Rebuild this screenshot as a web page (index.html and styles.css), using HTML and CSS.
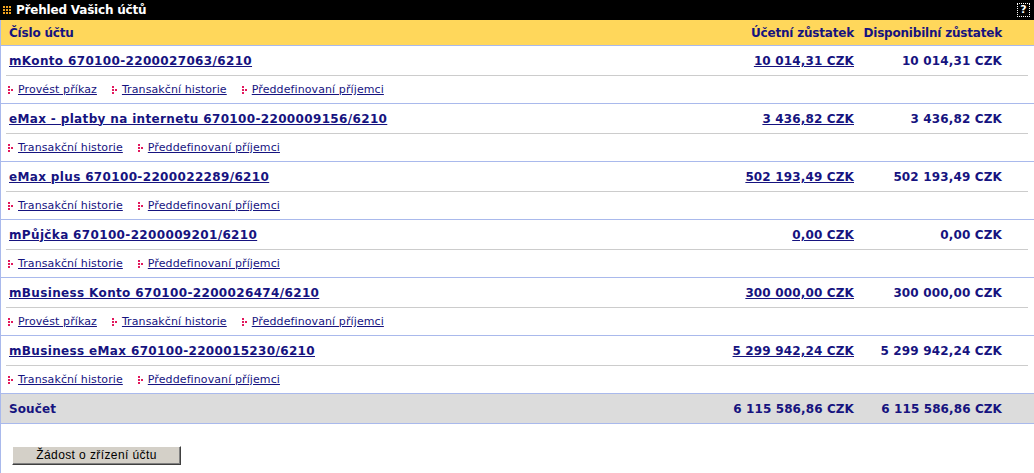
FILE: index.html
```html
<!DOCTYPE html>
<html lang="cs">
<head>
<meta charset="utf-8">
<title>Přehled Vašich účtů</title>
<link rel="stylesheet" href="styles.css">
</head>
<body>
<div class="panel">
  <div class="titlebar">
    <svg class="ticon" width="8" height="8" viewBox="0 0 8 8">
      <g fill="#f2a31f">
        <rect x="0" y="0" width="2" height="2"/><rect x="3" y="0" width="2" height="2"/><rect x="6" y="0" width="2" height="2"/>
        <rect x="0" y="3" width="2" height="2"/><rect x="3" y="3" width="2" height="2"/><rect x="6" y="3" width="2" height="2"/>
        <rect x="0" y="6" width="2" height="2"/><rect x="3" y="6" width="2" height="2"/><rect x="6" y="6" width="2" height="2"/>
      </g>
    </svg>
    <span class="ttext">Přehled Vašich účtů</span>
    <span class="help">?</span>
  </div>

  <div class="head">
    <div>Číslo účtu</div>
    <div class="num">Účetní zůstatek</div>
    <div class="num">Disponibilní zůstatek</div>
  </div>

  <div class="acct">
    <div class="acct-line">
      <a href="#" class="name">mKonto 670100-2200027063/6210</a>
      <a href="#" class="num">10 014,31 CZK</a>
      <span class="num">10 014,31 CZK</span>
    </div>
    <div class="links">
      <a href="#" class="lnk">Provést příkaz</a>
      <a href="#" class="lnk">Transakční historie</a>
      <a href="#" class="lnk">Předdefinovaní příjemci</a>
    </div>
  </div>

  <div class="acct">
    <div class="acct-line">
      <a href="#" class="name">eMax - platby na internetu 670100-2200009156/6210</a>
      <a href="#" class="num">3 436,82 CZK</a>
      <span class="num">3 436,82 CZK</span>
    </div>
    <div class="links">
      <a href="#" class="lnk">Transakční historie</a>
      <a href="#" class="lnk">Předdefinovaní příjemci</a>
    </div>
  </div>

  <div class="acct">
    <div class="acct-line">
      <a href="#" class="name">eMax plus 670100-2200022289/6210</a>
      <a href="#" class="num">502 193,49 CZK</a>
      <span class="num">502 193,49 CZK</span>
    </div>
    <div class="links">
      <a href="#" class="lnk">Transakční historie</a>
      <a href="#" class="lnk">Předdefinovaní příjemci</a>
    </div>
  </div>

  <div class="acct">
    <div class="acct-line">
      <a href="#" class="name">mPůjčka 670100-2200009201/6210</a>
      <a href="#" class="num">0,00 CZK</a>
      <span class="num">0,00 CZK</span>
    </div>
    <div class="links">
      <a href="#" class="lnk">Transakční historie</a>
      <a href="#" class="lnk">Předdefinovaní příjemci</a>
    </div>
  </div>

  <div class="acct">
    <div class="acct-line">
      <a href="#" class="name">mBusiness Konto 670100-2200026474/6210</a>
      <a href="#" class="num">300 000,00 CZK</a>
      <span class="num">300 000,00 CZK</span>
    </div>
    <div class="links">
      <a href="#" class="lnk">Provést příkaz</a>
      <a href="#" class="lnk">Transakční historie</a>
      <a href="#" class="lnk">Předdefinovaní příjemci</a>
    </div>
  </div>

  <div class="acct">
    <div class="acct-line">
      <a href="#" class="name">mBusiness eMax 670100-2200015230/6210</a>
      <a href="#" class="num">5 299 942,24 CZK</a>
      <span class="num">5 299 942,24 CZK</span>
    </div>
    <div class="links">
      <a href="#" class="lnk">Transakční historie</a>
      <a href="#" class="lnk">Předdefinovaní příjemci</a>
    </div>
  </div>

  <div class="total">
    <div>Součet</div>
    <div class="num">6 115 586,86 CZK</div>
    <div class="num">6 115 586,86 CZK</div>
  </div>

  <div class="actions">
    <button type="button" class="btn">Žádost o zřízení účtu</button>
  </div>
</div>
</body>
</html>
```

FILE: styles.css
```css
html, body {
  margin: 0;
  padding: 0;
  background: #ffffff;
}
body {
  font-family: "DejaVu Sans", Verdana, sans-serif;
  color: #16137f;
  width: 1034px;
  height: 473px;
  overflow: hidden;
}
.panel {
  border-left: 1px solid #a9b9ec;
  min-height: 473px;
  box-sizing: border-box;
}
.titlebar {
  height: 20px;
  background: #000000;
  display: flex;
  align-items: center;
  padding-left: 3px;
  margin-left: -1px;
}
.ticon {
  display: block;
  flex: none;
}
.ttext {
  color: #ffffff;
  font-weight: bold;
  font-size: 12px;
  margin-left: 5px;
  letter-spacing: -0.2px;
}
.help {
  margin-left: auto;
  margin-right: 4px;
  width: 11px;
  height: 12px;
  border: 1px dotted #ffffff;
  color: #ffffff;
  font-weight: bold;
  font-size: 11px;
  line-height: 12px;
  text-align: center;
}
.head,
.total {
  display: grid;
  grid-template-columns: 1fr 150px 148px;
  align-items: center;
  padding: 0 32px 0 8px;
  font-weight: bold;
  font-size: 12px;
}
.head {
  height: 25px;
  letter-spacing: -0.2px;
  background: #ffd75b;
  border-bottom: 1px solid #a9b9ec;
}
.total {
  height: 29px;
  letter-spacing: 0.1px;
  background: #dcdcdc;
  border-bottom: 1px solid #a9b9ec;
}
.num {
  text-align: right;
  justify-self: end;
}
.acct {
  border-bottom: 1px solid #a9b9ec;
}
.acct-line {
  display: grid;
  grid-template-columns: 1fr 150px 148px;
  align-items: center;
  height: 29px;
  margin: 0 6px 0 5px;
  padding: 0 26px 0 3px;
  border-bottom: 1px solid #cccccc;
  font-weight: bold;
  font-size: 12px;
  letter-spacing: 0.15px;
}
a {
  color: #16137f;
  text-decoration: underline;
}
.name {
  justify-self: start;
  letter-spacing: 0.35px;
}
.links {
  height: 27px;
  display: flex;
  align-items: center;
  padding-left: 7px;
  gap: 15px;
  font-size: 11px;
  letter-spacing: 0.1px;
}
.lnk {
  display: inline-flex;
  align-items: center;
}
.lnk::before {
  content: "";
  display: inline-block;
  width: 5px;
  height: 8px;
  margin-right: 5px;
  background:
    linear-gradient(#e2195d, #e2195d) 0 0 / 2px 2px no-repeat,
    linear-gradient(#e2195d, #e2195d) 0 3px / 2px 2px no-repeat,
    linear-gradient(#e2195d, #e2195d) 0 6px / 2px 2px no-repeat,
    linear-gradient(#e2195d, #e2195d) 3px 3px / 2px 2px no-repeat;
}
.actions {
  padding: 20px 0 0 11px;
}
.btn {
  width: 169px;
  height: 19px;
  padding: 0;
  background: #d4d0c8;
  border: 1px solid;
  border-color: #ffffff #404040 #404040 #ffffff;
  box-shadow: inset -1px -1px 0 #808080;
  font-family: "Liberation Sans", Arial, sans-serif;
  font-size: 12px;
  letter-spacing: 0.4px;
  color: #000000;
}
```
